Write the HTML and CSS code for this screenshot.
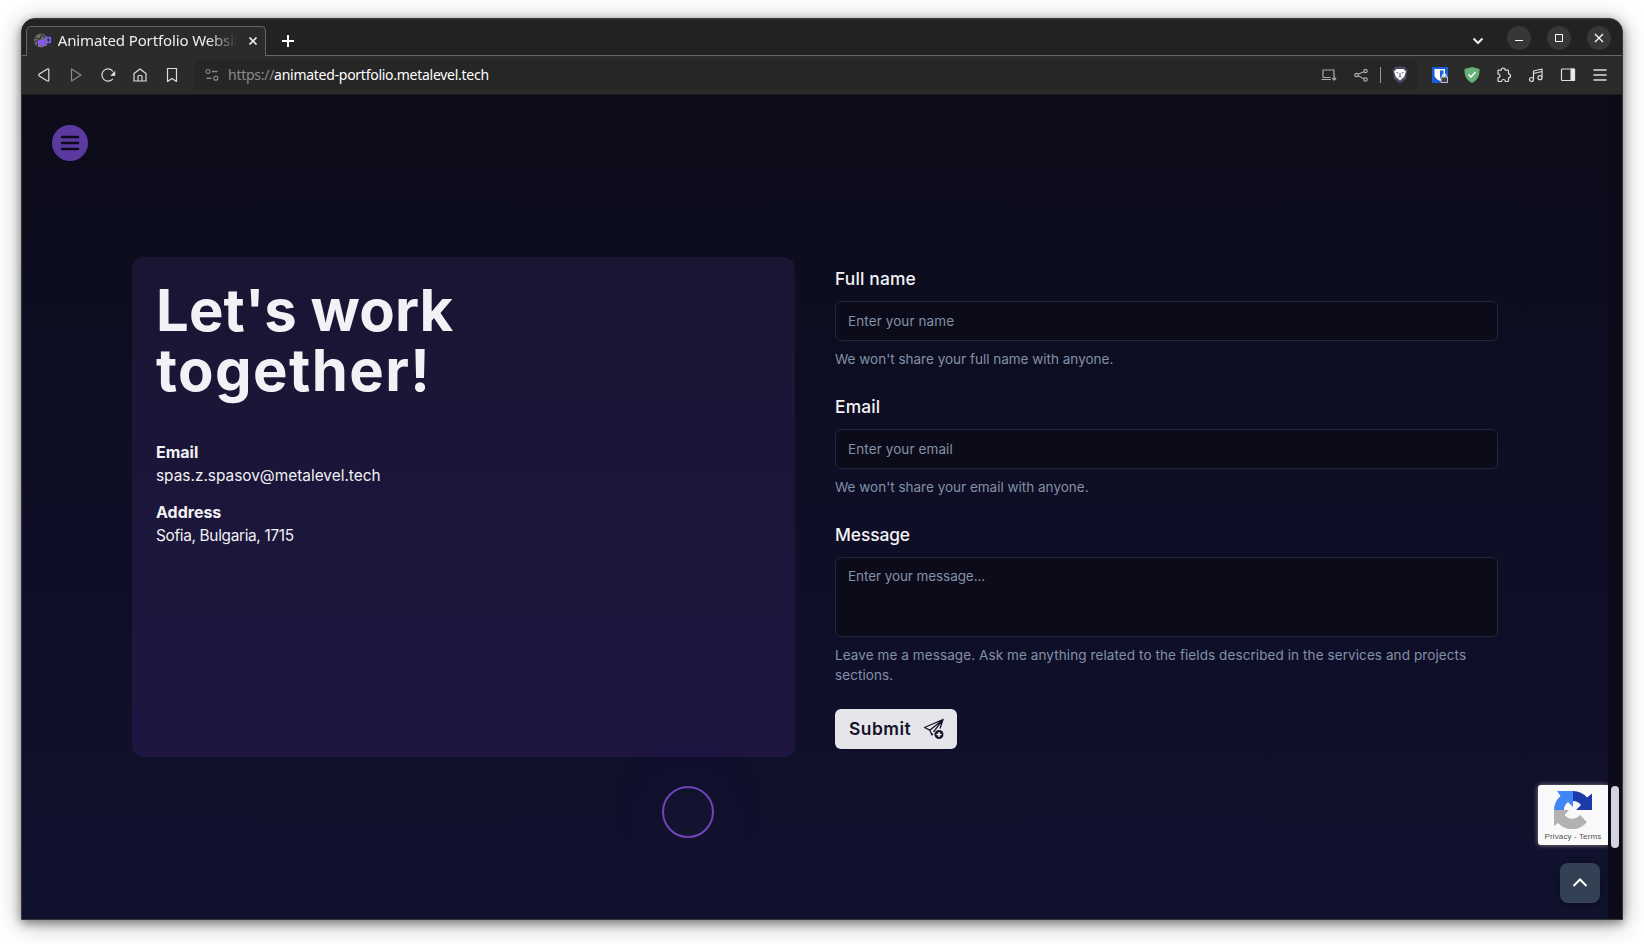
FILE: index.html
```
<!DOCTYPE html>
<html lang="en">
<head>
<meta charset="utf-8">
<title>Animated Portfolio Website</title>
<link rel="stylesheet" href="styles.css">
</head>
<body>
<div class="window">
  <header class="tabbar">
    <div class="tab">
      <svg class="favicon" width="18" height="16" viewBox="0 0 18 16"><circle cx="7" cy="7.500" r="7" fill="#6c6c6c"/><path d="M1 5l5 1 2-5M0 9l5-2M3 13l2-5M9 2l2 3" stroke="#2f2f2f" fill="none" stroke-width="1.100"/><path d="M5 13V8h4v5M5 10.800h4M12 13V4.500h4.500v5H12" stroke="#8656ff" stroke-width="1.800" fill="none"/></svg>
      <span class="tab-title">Animated Portfolio Website</span>
      <svg class="tab-close" width="10" height="10" viewBox="0 0 10 10"><path d="M1.500 1.500l7 7m0-7l-7 7" stroke="#eee" stroke-width="1.700"/></svg>
    </div>
    <svg class="newtab" width="12" height="12" viewBox="0 0 12 12"><path d="M6 0v12M0 6h12" stroke="#fff" stroke-width="2"/></svg>
    <div class="controls">
      <svg class="tabs-chevron" width="12" height="8" viewBox="0 0 12 8"><path d="M1.500 1.500L6 6l4.500-4.500" fill="none" stroke="#eee" stroke-width="2"/></svg>
      <span class="control"><svg width="10" height="10" viewBox="0 0 10 10"><path d="M1 7.500h8" stroke="#fff"/></svg></span>
      <span class="control"><svg width="10" height="10" viewBox="0 0 10 10"><path d="M1.500 1.500h7v7h-7z" fill="none" stroke="#fff"/></svg></span>
      <span class="control"><svg width="10" height="10" viewBox="0 0 10 10"><path d="M1 1l8 8m0-8l-8 8" stroke="#fff" stroke-width="1.200"/></svg></span>
    </div>
  </header>
  <nav class="toolbar">
    <div class="nav-icons">
      <svg width="16" height="16" viewBox="0 0 16 16"><path d="M11 2.200Q12.800 1.200 12.800 3v10q0 1.800-1.800.8L3.300 9q-1.300-1 0-2z"/></svg>
      <svg class="dim" width="16" height="16" viewBox="0 0 16 16"><path d="M3.500 2v12L13 8z"/></svg>
      <svg width="16" height="16" viewBox="0 0 16 16"><path d="M12.800 11.800A6.100 6.100 0 1 1 13 4.500" /><path d="M14.800 4.500V8.500H11z" fill="#eee" stroke-width=".8"/></svg>
      <svg width="16" height="16" viewBox="0 0 16 16"><path d="M2 6.500L8 2l6 4.500V14H2zM6 14V9.500a1 1 0 0 1 1-1h2a1 1 0 0 1 1 1V14"/></svg>
      <svg width="16" height="16" viewBox="0 0 16 16"><path d="M3.500 1.500h9v13L8 11.500l-4.500 3z"/></svg>
    </div>
    <div class="address">
      <svg class="dim" width="14" height="14" viewBox="0 0 14 14"><circle cx="3" cy="3.500" r="2"/><circle cx="10.800" cy="10.200" r="2"/><path d="M7 3.500h5.500M1.500 10.200h5" stroke-width="1.500"/></svg>
      <span class="url"><span class="scheme">https://</span>animated-portfolio.metalevel.tech</span>
      <div class="address-icons">
        <svg width="16" height="16" viewBox="0 0 16 16"><path d="M2 10.500V3h11v6.500M.5 12.500h9.500M2 10.500h7.500M13.200 8v5m-2-2l2 2 2-2"/></svg>
        <svg class="share" width="16" height="16" viewBox="0 0 16 16"><circle cx="3.500" cy="8" r="1.700"/><circle cx="12.500" cy="4" r="1.700"/><circle cx="12.500" cy="12.500" r="1.700"/><path d="M5 7.200l6-2.500M5 8.800l6 3"/></svg>
        <span class="divider"></span>
        <svg width="16" height="18" viewBox="0 0 16 18"><path d="M4 .5h8l3.500 3-1.500 9.500-6 4.500L2 13 .5 3.500z" fill="#4a4b62" stroke="none"/><path d="M4.500 3h7l2.500 2.500-2 5.500-4 3.500L4 11 2 5.500z" fill="#fff" stroke="none"/><path d="M4.500 6.500l2 .7M11.500 6.500l-2 .7M8 7v3M6.500 11l1.500-1 1.500 1" stroke="#4a4b62" stroke-width=".9"/></svg>
      </div>
    </div>
    <div class="extensions">
      <svg width="16" height="16" viewBox="0 0 16 16"><path d="M0 0h16v16H0z" fill="#175ddc" stroke="none"/><path d="M2.500 2h10.500v6c0 3-3 5-5 6-2-1-5.500-3-5.500-6z" fill="#fff" stroke="none"/><path d="M8 3.500h3.500V8c0 2-1.500 3-3.500 4z" fill="#175ddc" stroke="none"/><path d="M9 10h6.500v5.500H9z" fill="#444" stroke="#ddd" stroke-width=".8"/><path d="M10.500 10V8.800a1.800 1.800 0 0 1 3.600 0V10" stroke="#ddd"/></svg>
      <svg width="16" height="16" viewBox="0 0 16 16"><path d="M8 0l7.500 2c.3 6-1.500 11-7.500 14C2 13 .2 8 .5 2z" fill="#67b279" stroke="none"/><path d="M4.500 7.500L7 10l4.500-5" stroke="#fff" stroke-width="1.500"/></svg>
      <svg width="16" height="16" viewBox="0 0 16 16"><path d="M2 4q0-.8.8-.8h2.400a2 2 0 1 1 4 0h2.500q.8 0 .8.800v2.800a2 2 0 1 1 0 4v2.900q0 .8-.8.8H9.400a2 2 0 0 0-4 0H2.800q-.8 0-.8-.8v-2.800a2 2 0 0 0 0-4z"/></svg>
      <svg width="16" height="16" viewBox="0 0 16 16"><path d="M5.500 12.500V4l8.500-2v8.500M5.500 6.500L14 4.500"/><circle cx="3.500" cy="12.500" r="2"/><circle cx="12" cy="10.700" r="2"/></svg>
      <svg width="16" height="16" viewBox="0 0 16 16"><rect x="1.500" y="2" width="13" height="11.500" rx="1"/><path d="M11 2h3.500v11.500H11z" fill="#eee"/></svg>
      <svg width="16" height="16" viewBox="0 0 16 16"><path d="M1.500 3h13M1.500 8h13M1.500 13h13" stroke-width="1.500"/></svg>
    </div>
  </nav>
  <div class="viewport">
    <button class="menu" aria-label="Menu"><svg width="20" height="18" viewBox="0 0 20 18"><path d="M2 3h16M2 9h16M2 15h16" stroke="#0d0b1c" stroke-width="2.500" stroke-linecap="round"/></svg></button>
    <main class="contact">
      <section class="card">
        <h1>Let's work<br><span class="second">together!</span></h1>
        <dl>
          <dt>Email</dt><dd>spas.z.spasov@metalevel.tech</dd>
          <dt>Address</dt><dd class="place">Sofia, Bulgaria, 1715</dd>
        </dl>
      </section>
      <form class="form">
        <div class="field"><label>Full name</label><div class="input">Enter your name</div><p>We won't share your full name with anyone.</p></div>
        <div class="field"><label>Email</label><div class="input">Enter your email</div><p>We won't share your email with anyone.</p></div>
        <div class="field"><label class="tight">Message</label><div class="input area">Enter your message...</div><p class="loose">Leave me a message. Ask me anything related to the fields described in the services and projects<br>sections.</p></div>
        <button class="submit" type="button"><span>Submit</span>
          <svg width="22" height="22" viewBox="0 0 22 22"><path d="M10 15.500L9 17 6.800 12.200 1.500 9.500 20 1.500l-3 9M6.800 12.200L20 1.500l-9.500 12.300" fill="none" stroke="#15132a" stroke-width="1.300" stroke-linejoin="round"/><circle cx="16" cy="16.500" r="4.500" fill="#15132a"/><path d="M16 14v5M13.500 16.500h5" stroke="#fff" stroke-width="1.400"/></svg>
        </button>
      </form>
    </main>
    <div class="cursor-ring"></div>
    <div class="recaptcha">
      <svg width="38" height="38" viewBox="0 0 38 38"><path d="M19 0a19 19 0 0 1 14 6.500L38 2.500V19H22l5-5a10 10 0 0 0-8-4z" fill="#1c3aa9"/><path d="M19 0v16l-5-5a10 10 0 0 0-4 8H0A19 19 0 0 1 6.500 5L3 0z" fill="#4285f4"/><path d="M0 19h15l-4.500 5a10 10 0 0 0 15.500 0l7 7A19 19 0 0 1 4 32l-4 3z" fill="#b2b2b2"/></svg>
      <span>Privacy - Terms</span>
    </div>
    <button class="to-top" aria-label="Back to top"><svg width="16" height="10" viewBox="0 0 16 10"><path d="M1.500 8L8 1.500 14.500 8" stroke="#fff" stroke-width="2" fill="none"/></svg></button>
    <div class="scrollbar"><div class="thumb"></div></div>
  </div>
</div>
</body>
</html>
```
FILE: styles.css
```
* { box-sizing: border-box; }
body { margin: 0; height: 944px; padding: 18px 21px 24px; background: #fff; font-family: Inter, "Open Sans", sans-serif; overflow: hidden; }
.window { height: 902px; width: 1602px; border: 1px solid #353535; border-radius: 14px 14px 0 0; background: #2b2b2b; overflow: hidden; box-shadow: 0 3px 10px rgba(0,0,0,.4), 0 4px 24px rgba(0,0,0,.32); }
.tabbar { height: 37px; display: flex; align-items: flex-start; background: #222; border-top: 1px solid #303030; border-bottom: 1px solid #666; padding-left: 4px; }
.tab { width: 240px; height: 30px; margin-top: 6px; flex: none; display: flex; align-items: center; padding: 0 7px 2px; background: #2b2b2b; border: 1px solid #666; border-bottom: 0; border-radius: 5px 5px 0 0; font: 15px/22px "Noto Sans", sans-serif; color: #eee; }
.favicon { margin-right: 6px; }
.tab-title { width: 181px; padding-bottom: 2px; letter-spacing: -.13px; overflow: hidden; white-space: nowrap; -webkit-mask-image: linear-gradient(to right, #000 150px, transparent 180px); mask-image: linear-gradient(to right, #000 150px, transparent 180px); }
.tab-close { margin-left: 12px; flex: none; }
.newtab { margin: 15px 0 0 16px; }
.controls { margin: 6px 11px 0 auto; display: flex; align-items: center; gap: 16px; }
.control { width: 24px; height: 24px; border-radius: 50%; background: #373737; display: flex; align-items: center; justify-content: center; }
.tabs-chevron { margin: 6px 7px 0 0; }
.toolbar { height: 39px; display: flex; align-items: center; background: #2b2b2b; border-bottom: 1px solid #1e1e1e; }
.toolbar svg { fill: none; stroke: #ddd; stroke-width: 1.2; stroke-linejoin: round; flex: none; }
.toolbar svg.dim { stroke: #888; }
.nav-icons { display: flex; gap: 16px; margin-left: 14px; }
.address { width: 1224px; height: 30px; margin-left: 14px; border-radius: 4px; background: #262626; display: flex; align-items: center; padding: 0 10px 0 11px; }
.url { margin-left: 9px; padding-bottom: 1px; font: 14px "Noto Sans", sans-serif; letter-spacing: -.27px; color: #fff; white-space: nowrap; }
.scheme { color: #8b8b8b; }
.address-icons { margin-left: auto; display: flex; align-items: center; gap: 11px; }
.toolbar .address-icons svg { stroke: #aaa; }
.address-icons .share { margin-left: 5px; }
.divider { width: 1px; height: 16px; background: #999; }
.extensions { display: flex; gap: 16px; margin-left: 14px; }
.viewport { position: relative; height: 824px; background: linear-gradient(#0c0b19, #0c0d1f 25%, #0f0e28 60%, #11122e); }
.menu { position: absolute; left: 30px; top: 30px; width: 36px; height: 36px; padding: 0; border: 0; border-radius: 50%; background: #5b3aa0; display: flex; align-items: center; justify-content: center; }
.contact { padding: 162px 0 0 110px; display: flex; gap: 40px; }
.card { width: 663px; height: 500px; padding: 23px 24px; border-radius: 12px; background: linear-gradient(#1b1433, #1b163a 50%, #1e1641); color: #f2f1f5; }
h1 { margin: 0 0 40px; font-size: 58px; line-height: 60px; font-weight: 700; letter-spacing: .1px; }
.second { letter-spacing: 1.4px; }
dl { margin: 0; font-size: 15.4px; line-height: 24px; }
dt { font-size: 16px; font-weight: 700; }
dd { margin: 0 0 12px; }
.place { letter-spacing: -.33px; }
.form { width: 663px; padding-top: 12px; }
.field { display: flex; flex-direction: column; gap: 8px; margin-bottom: 28px; }
.field label { margin-bottom: 4px; font-size: 17.4px; line-height: 20px; font-weight: 500; letter-spacing: .15px; color: #f2f1f5; }
.field label.tight { letter-spacing: -.1px; }
.input { height: 40px; padding: 9px 12px; border: 1px solid #1e293b; border-radius: 6px; background: #0c0b19; color: #8391a7; font-size: 13.5px; line-height: 20px; letter-spacing: .1px; }
.area { height: 80px; padding-top: 8px; letter-spacing: -.08px; }
.field p { margin: 0; font-size: 13.5px; line-height: 20px; color: #8391a7; white-space: nowrap; }
.field .loose { letter-spacing: .09px; }
.submit { margin-top: -4px; width: 122px; height: 40px; padding: 0 12px 0 14px; display: flex; align-items: center; justify-content: space-between; border: 0; border-radius: 6px; background: #e6e5ea; color: #15132a; font: 600 17.4px Inter, sans-serif; letter-spacing: .5px; }
.submit span { padding-bottom: 1px; }
.cursor-ring { position: absolute; left: 640px; top: 691px; width: 52px; height: 52px; border: 2px solid #6b45b8; border-radius: 50%; box-shadow: 0 0 60px 15px rgba(91,58,160,.05); background: rgba(91,58,160,.04); }
.recaptcha { position: absolute; left: 1516px; top: 690px; width: 70px; height: 60px; padding-top: 6px; border-radius: 3px 0 0 3px; background: #f9f9f9; box-shadow: 0 0 5px #888; display: flex; flex-direction: column; align-items: center; gap: 3px; font: 8px "Liberation Sans", sans-serif; letter-spacing: .12px; color: #555; white-space: nowrap; }
.to-top { position: absolute; left: 1538px; top: 768px; width: 40px; height: 40px; padding: 0; border: 0; border-radius: 8px; background: #334155; display: flex; align-items: center; justify-content: center; box-shadow: 0 3px 8px rgba(0,0,0,.3); }
.scrollbar { position: absolute; top: 0; right: 0; width: 14px; height: 100%; background: #0d0b19; }
.thumb { width: 8px; height: 62px; margin: 691px auto 0 3px; border-radius: 4px; background: #d1d3de; }
```
